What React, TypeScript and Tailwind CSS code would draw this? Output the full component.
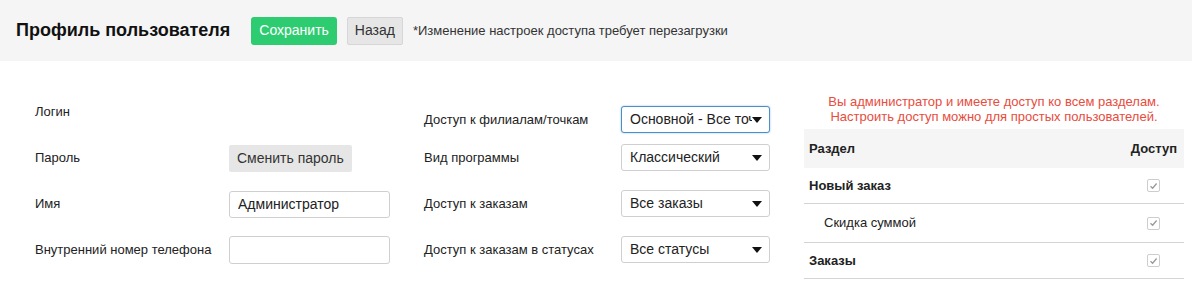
import React from "react";

function Caret() {
  return (
    <svg width="10" height="6" viewBox="0 0 10 6" className="shrink-0">
      <path d="M0 0 H10 L5 6 Z" fill="#111" />
    </svg>
  );
}

function SelectBox({ value, focused = false }: { value: string; focused?: boolean }) {
  return (
    <div
      className={
        "flex h-[27px] w-[149px] items-center justify-between rounded-[3px] border bg-white pl-[8px] pr-[7px] text-[14px] text-[#222] " +
        (focused ? "border-[#4a90c8] shadow-[0_0_2px_rgba(74,144,200,0.6)]" : "border-[#cfcfcf]")
      }
    >
      <span className="overflow-hidden whitespace-nowrap pr-1">{value}</span>
      <Caret />
    </div>
  );
}

function Check() {
  return (
    <div className="flex h-[13px] w-[13px] items-center justify-center rounded-[2px] border border-[#cdcdcd] bg-white">
      <svg width="9" height="8" viewBox="0 0 9 8">
        <path d="M1.5 4.2 L3.6 6.2 L7.6 1.5" fill="none" stroke="#9a9a9a" strokeWidth="1.3" />
      </svg>
    </div>
  );
}

const rows = [
  { name: "Новый заказ", bold: true, h: "h-[36px]" },
  { name: "Скидка суммой", bold: false, h: "h-[39px]" },
  { name: "Заказы", bold: true, h: "h-[36px]" },
];

export default function App() {
  return (
    <div className="h-[283px] w-[1192px] overflow-hidden bg-white font-['Liberation_Sans',Arial,sans-serif] text-[#222]">
      <div className="flex h-[61px] items-center bg-[#f5f5f5] pl-[16px]">
        <h1 className="text-[18px] font-bold text-[#111]">Профиль пользователя</h1>
        <button className="ml-[21px] h-[28px] rounded-[3px] bg-[#2ecc71] px-[8px] text-[14px] text-white">
          Сохранить
        </button>
        <button className="ml-[10px] h-[28px] rounded-[2px] border border-[#d6d6d6] bg-[#e6e6e6] px-[7px] text-[14px] text-[#333]">
          Назад
        </button>
        <span className="ml-[10px] text-[13px] text-[#333]">
          *Изменение настроек доступа требует перезагрузки
        </span>
      </div>

      <div className="flex">
        <div className="ml-[35px] mt-[28px] w-[355px] text-[13px]">
          <div className="flex h-[46px] items-center">Логин</div>
          <div className="flex h-[46px] items-center">
            <span className="w-[194px]">Пароль</span>
            <button className="h-[27px] rounded-[2px] bg-[#e6e6e6] px-[8px] text-[14px] text-[#333]">
              Сменить пароль
            </button>
          </div>
          <div className="flex h-[46px] items-center">
            <span className="w-[194px]">Имя</span>
            <input
              readOnly
              value="Администратор"
              className="h-[27px] w-[161px] rounded-[3px] border border-[#cfcfcf] px-[8px] text-[14px] text-[#222] outline-none"
            />
          </div>
          <div className="flex h-[46px] items-center">
            <span className="w-[194px]">Внутренний номер телефона</span>
            <input
              readOnly
              value=""
              className="h-[28px] w-[161px] rounded-[3px] border border-[#cfcfcf] px-[8px] text-[14px] outline-none"
            />
          </div>
        </div>

        <div className="ml-[34px] mt-[45px] w-[346px] text-[13px]">
          <div className="flex items-center">
            <span className="w-[197px]">Доступ к филиалам/точкам</span>
            <SelectBox value="Основной - Все точки" focused />
          </div>
          <div className="mt-[11px] flex items-center">
            <span className="w-[197px]">Вид программы</span>
            <SelectBox value="Классический" />
          </div>
          <div className="mt-[19px] flex items-center">
            <span className="w-[197px]">Доступ к заказам</span>
            <SelectBox value="Все заказы" />
          </div>
          <div className="mt-[19px] flex items-center">
            <span className="w-[197px]">Доступ к заказам в статусах</span>
            <SelectBox value="Все статусы" />
          </div>
        </div>

        <div className="ml-[34px] mt-[33px] w-[380px] text-[13px]">
          <p className="text-center leading-[15px] text-[#e84c3d]">
            Вы администратор и имеете доступ ко всем разделам.
            <br />
            Настроить доступ можно для простых пользователей.
          </p>
          <div className="mt-[5px] flex h-[39px] items-center justify-between bg-[#f5f5f5] pl-[5px] pr-[7px] font-bold">
            <span>Раздел</span>
            <span>Доступ</span>
          </div>
          {rows.map((r) => (
            <div
              key={r.name}
              className={
                "flex items-center justify-between border-b border-[#d4d4d4] pl-[5px] pr-[24px] " +
                r.h +
                (r.bold ? " font-bold" : "")
              }
            >
              <span className={r.bold ? "" : "pl-[15px]"}>{r.name}</span>
              <Check />
            </div>
          ))}
        </div>
      </div>
    </div>
  );
}
